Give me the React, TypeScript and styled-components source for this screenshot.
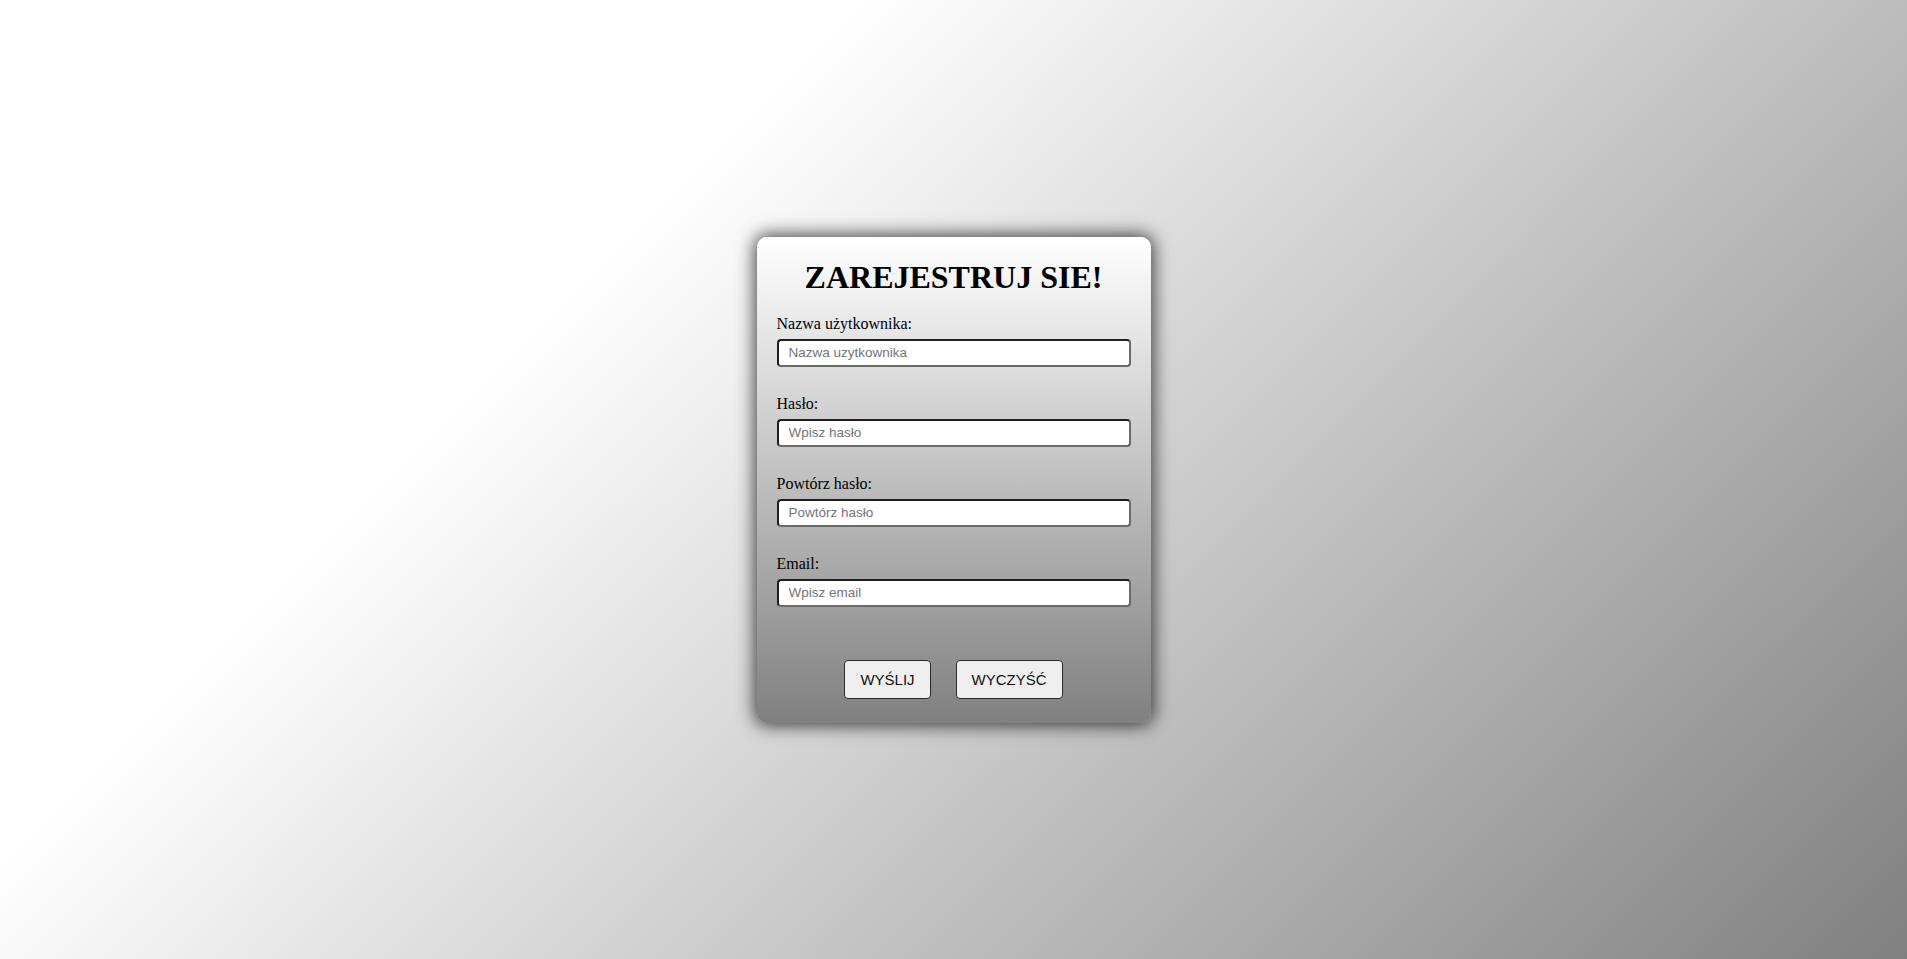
import React, { useState } from "react";
import styled, { createGlobalStyle } from "styled-components";

const GlobalStyle = createGlobalStyle`
  html, body {
    margin: 0;
    padding: 0;
  }
  body {
    font-family: "Liberation Serif", "Times New Roman", serif;
  }
`;

const Page = styled.div`
  min-height: 100vh;
  display: flex;
  align-items: center;
  justify-content: center;
  background: linear-gradient(135deg, #ffffff 30%, #808080);
`;

const Card = styled.form`
  width: 394px;
  box-sizing: border-box;
  padding: 22px 20px 24px;
  border-radius: 10px;
  background: linear-gradient(to bottom, #ffffff, #808080);
  box-shadow: 0 0 18px 2px rgba(0, 0, 0, 0.75);
  display: flex;
  flex-direction: column;
`;

const Title = styled.h1`
  margin: 0 0 19px;
  font-size: 32px;
  font-weight: bold;
  text-align: center;
  color: #000;
`;

const Fields = styled.div`
  display: flex;
  flex-direction: column;
  gap: 28px;
`;

const Field = styled.div`
  display: flex;
  flex-direction: column;
  gap: 6px;
`;

const Label = styled.label`
  font-size: 16px;
  line-height: 18px;
  color: #000;
`;

const Input = styled.input`
  height: 28px;
  box-sizing: border-box;
  width: 100%;
  padding: 0 10px;
  border: 2px solid;
  border-color: #1e1e1e #6a6a6a #6a6a6a #1e1e1e;
  border-radius: 4px;
  background: #fff;
  font-family: "Liberation Sans", Arial, sans-serif;
  font-size: 13.5px;
  color: #000;
  outline: none;

  &::placeholder {
    color: #757575;
  }
`;

const Actions = styled.div`
  display: flex;
  justify-content: center;
  gap: 25px;
  margin-top: 53px;
`;

const Button = styled.button`
  height: 39px;
  padding: 0 15px;
  border: 1px solid #2a2a2a;
  border-radius: 4px;
  background: #efefef;
  font-family: "Liberation Sans", Arial, sans-serif;
  font-size: 15px;
  color: #111;
  cursor: pointer;
`;

const fields = [
  { id: "user", label: "Nazwa użytkownika:", placeholder: "Nazwa uzytkownika", type: "text" },
  { id: "pass", label: "Hasło:", placeholder: "Wpisz hasło", type: "password" },
  { id: "pass2", label: "Powtórz hasło:", placeholder: "Powtórz hasło", type: "password" },
  { id: "email", label: "Email:", placeholder: "Wpisz email", type: "email" },
];

export default function App() {
  const [values, setValues] = useState<Record<string, string>>({});

  return (
    <>
      <GlobalStyle />
      <Page>
        <Card onSubmit={(e) => e.preventDefault()}>
          <Title>ZAREJESTRUJ SIE!</Title>
          <Fields>
            {fields.map((f) => (
              <Field key={f.id}>
                <Label htmlFor={f.id}>{f.label}</Label>
                <Input
                  id={f.id}
                  type={f.type}
                  placeholder={f.placeholder}
                  value={values[f.id] ?? ""}
                  onChange={(e) => setValues({ ...values, [f.id]: e.target.value })}
                />
              </Field>
            ))}
          </Fields>
          <Actions>
            <Button type="submit">WYŚLIJ</Button>
            <Button type="button" onClick={() => setValues({})}>
              WYCZYŚĆ
            </Button>
          </Actions>
        </Card>
      </Page>
    </>
  );
}
